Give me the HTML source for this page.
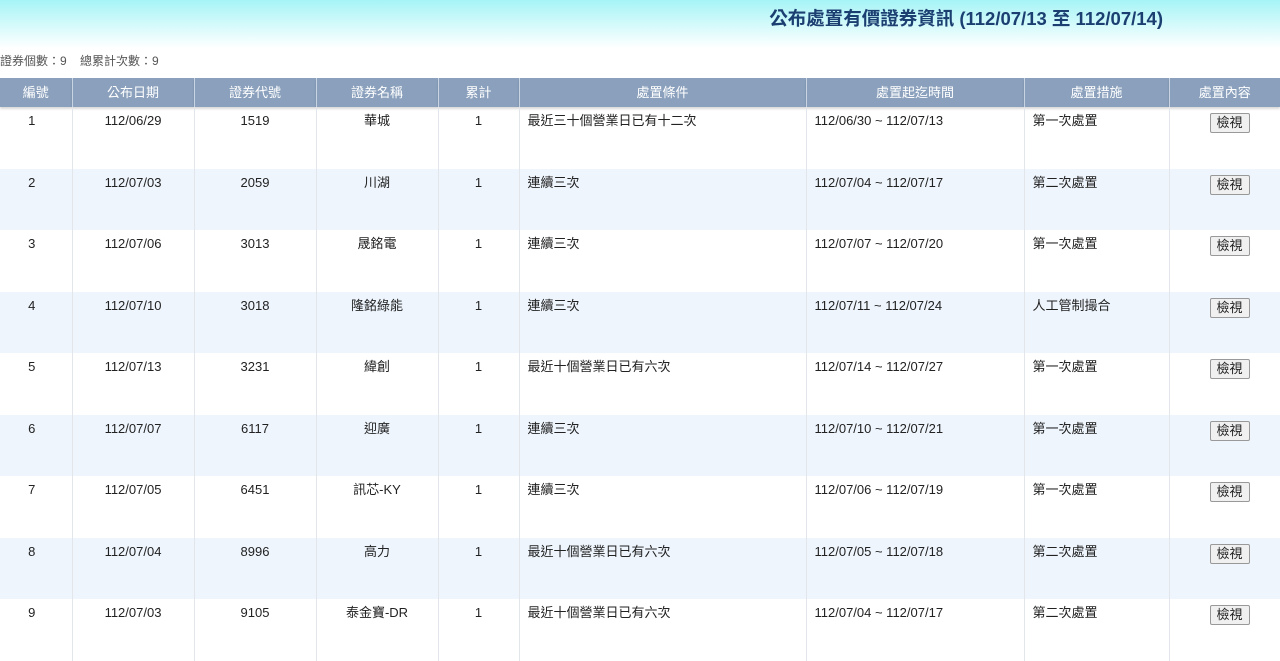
<!DOCTYPE html>
<html><head><meta charset="utf-8"><style>
body{margin:0;width:1280px;height:654px;overflow:hidden;background:#fff;font-family:"Liberation Sans","Noto Sans CJK TC",sans-serif;}
.top{height:48px;background:linear-gradient(#a6f4f6,#ffffff);position:relative}
.top h1{position:absolute;right:117px;top:8px;margin:0;font-size:18.5px;font-weight:bold;color:#1c3f72;line-height:22px}
.info{position:absolute;left:0;top:53px;font-size:12px;color:#555;line-height:16px}
table{position:absolute;top:78px;left:0;border-collapse:collapse;width:1280px;table-layout:fixed;font-size:13px;color:#222}
th{background:#8aa0bc;color:#fff;font-weight:normal;height:29px;border-left:1px solid #c8d4e2;padding:0;font-size:13px;line-height:16px;box-shadow:0 2px 2px rgba(0,0,0,.15)}
th:first-child{border-left:none}
td{height:61.5px;vertical-align:top;padding:6px 0 0;border-left:1px solid #e2e6ea;text-align:center;box-sizing:border-box;line-height:16px}
td:first-child{border-left:none;padding-right:8px}
td.l{text-align:left;padding-left:8px}
tr:nth-child(even) td{background:#eef5fd}
button{font:13px/16px "Liberation Sans","Noto Sans CJK TC",sans-serif;background:#f0f0f0;border:1px solid #999;border-radius:2px;padding:1px 6px;color:#222;margin-left:32px;vertical-align:top;margin-top:0}
</style></head><body>
<div class="top"><h1>公布處置有價證券資訊 (112/07/13 至 112/07/14)</h1></div>
<div class="info">證券個數：9 &nbsp;&nbsp;&nbsp;總累計次數：9</div>
<table>
<colgroup><col style="width:72px"><col style="width:122px"><col style="width:122px"><col style="width:122px"><col style="width:81px"><col style="width:287px"><col style="width:218px"><col style="width:145px"><col style="width:111px"></colgroup>
<thead><tr><th>編號</th><th>公布日期</th><th>證券代號</th><th>證券名稱</th><th>累計</th><th>處置條件</th><th>處置起迄時間</th><th>處置措施</th><th>處置內容</th></tr></thead>
<tbody>
<tr><td>1</td><td>112/06/29</td><td>1519</td><td>華城</td><td>1</td><td class="l">最近三十個營業日已有十二次</td><td class="l">112/06/30 ~ 112/07/13</td><td class="l">第一次處置</td><td class="l"><button>檢視</button></td></tr>
<tr><td>2</td><td>112/07/03</td><td>2059</td><td>川湖</td><td>1</td><td class="l">連續三次</td><td class="l">112/07/04 ~ 112/07/17</td><td class="l">第二次處置</td><td class="l"><button>檢視</button></td></tr>
<tr><td>3</td><td>112/07/06</td><td>3013</td><td>晟銘電</td><td>1</td><td class="l">連續三次</td><td class="l">112/07/07 ~ 112/07/20</td><td class="l">第一次處置</td><td class="l"><button>檢視</button></td></tr>
<tr><td>4</td><td>112/07/10</td><td>3018</td><td>隆銘綠能</td><td>1</td><td class="l">連續三次</td><td class="l">112/07/11 ~ 112/07/24</td><td class="l">人工管制撮合</td><td class="l"><button>檢視</button></td></tr>
<tr><td>5</td><td>112/07/13</td><td>3231</td><td>緯創</td><td>1</td><td class="l">最近十個營業日已有六次</td><td class="l">112/07/14 ~ 112/07/27</td><td class="l">第一次處置</td><td class="l"><button>檢視</button></td></tr>
<tr><td>6</td><td>112/07/07</td><td>6117</td><td>迎廣</td><td>1</td><td class="l">連續三次</td><td class="l">112/07/10 ~ 112/07/21</td><td class="l">第一次處置</td><td class="l"><button>檢視</button></td></tr>
<tr><td>7</td><td>112/07/05</td><td>6451</td><td>訊芯-KY</td><td>1</td><td class="l">連續三次</td><td class="l">112/07/06 ~ 112/07/19</td><td class="l">第一次處置</td><td class="l"><button>檢視</button></td></tr>
<tr><td>8</td><td>112/07/04</td><td>8996</td><td>高力</td><td>1</td><td class="l">最近十個營業日已有六次</td><td class="l">112/07/05 ~ 112/07/18</td><td class="l">第二次處置</td><td class="l"><button>檢視</button></td></tr>
<tr><td>9</td><td>112/07/03</td><td>9105</td><td>泰金寶-DR</td><td>1</td><td class="l">最近十個營業日已有六次</td><td class="l">112/07/04 ~ 112/07/17</td><td class="l">第二次處置</td><td class="l"><button>檢視</button></td></tr>
</tbody></table>
</body></html>
